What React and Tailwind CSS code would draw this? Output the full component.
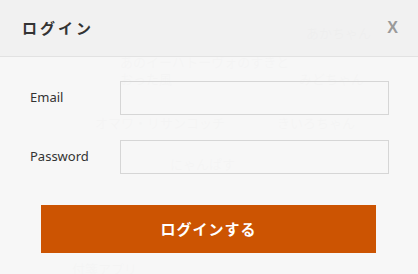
import React from "react";

const notes = [
  { t: "あかちゃん", x: 306, y: 25 },
  { t: "あのイーハトーヴォのすきと", x: 120, y: 54 },
  { t: "おった風", x: 120, y: 71 },
  { t: "みどちゃん", x: 299, y: 71 },
  { t: "オマワ・リサンコッチ", x: 95, y: 115 },
  { t: "きいろちゃん", x: 277, y: 115 },
  { t: "にゃんぱす", x: 170, y: 156 },
  { t: "てくてすた", x: 277, y: 221 },
  { t: "付箋アプリ", x: 72, y: 261 },
];

export default function App() {
  return (
    <div
      className="relative w-[418px] h-[274px] overflow-hidden bg-[#f7f7f7]"
      style={{ fontFamily: '"Noto Sans", "Noto Sans CJK JP", sans-serif' }}
    >
      {notes.map((n, i) => (
        <div
          key={i}
          className="absolute text-[13px] leading-[16px] text-[#c4c4c4] whitespace-nowrap"
          style={{ left: n.x, top: n.y }}
        >
          {n.t}
        </div>
      ))}
      <div className="absolute inset-0 flex flex-col">
        <div className="h-[57px] shrink-0 flex items-center justify-between pl-[22px] pr-[20px] bg-[#f0f0f0]/95 border-b border-[#e2e2e2]">
          <span className="text-[15px] font-bold tracking-[3px] text-[#333]" style={{ fontFamily: '"Noto Sans CJK JP", sans-serif' }}>
            ログイン
          </span>
          <span className="text-[16px] font-bold text-[#9a9a9a]" style={{ fontFamily: '"Liberation Sans", sans-serif' }}>
            X
          </span>
        </div>
        <div className="flex-1 bg-[#f7f7f7]/95 pt-[24px]">
          <div className="flex items-center">
            <label className="w-[120px] pl-[30px] text-[13px] text-[#333]">Email</label>
            <input className="w-[269px] h-[34px] border border-[#d6d6d6] bg-transparent outline-none" />
          </div>
          <div className="flex items-center mt-[25px]">
            <label className="w-[120px] pl-[30px] text-[13px] text-[#333]">Password</label>
            <input type="password" className="w-[269px] h-[34px] border border-[#d6d6d6] bg-transparent outline-none" />
          </div>
          <button
            className="mt-[31px] ml-[41px] w-[335px] h-[48px] bg-[#cc5402] text-white text-[15px] font-bold tracking-[1px] flex items-center justify-center"
            style={{ fontFamily: '"Noto Sans CJK JP", sans-serif' }}
          >
            ログインする
          </button>
        </div>
      </div>
    </div>
  );
}
